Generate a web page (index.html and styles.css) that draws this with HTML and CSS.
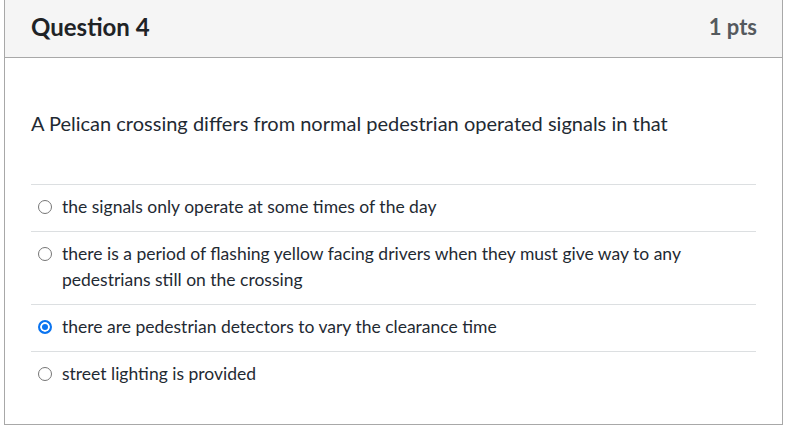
FILE: index.html
```html
<!DOCTYPE html>
<html lang="en">
<head>
<meta charset="utf-8">
<title>Question 4</title>
<link rel="stylesheet" href="styles.css">
</head>
<body>
<div class="question">
  <div class="header">
    <span class="title">Question 4</span>
    <span class="pts">1 pts</span>
  </div>
  <div class="content">
    <p class="text">A Pelican crossing differs from normal pedestrian operated signals in that</p>
    <div class="answers">
      <label class="answer"><span class="radio"></span><span class="label">the signals only operate at some times of the day</span></label>
      <label class="answer"><span class="radio"></span><span class="label">there is a period of flashing yellow facing drivers when they must give way to any pedestrians still on the crossing</span></label>
      <label class="answer"><span class="radio checked"></span><span class="label">there are pedestrian detectors to vary the clearance time</span></label>
      <label class="answer"><span class="radio"></span><span class="label">street lighting is provided</span></label>
    </div>
  </div>
</div>
</body>
</html>
```
FILE: styles.css
```css
* { box-sizing: border-box; }
body {
  margin: 0;
  background: #fff;
  font-family: Lato, "Noto Sans", sans-serif;
  color: #2d3b45;
}
.question {
  margin-left: 4px;
  width: 779px;
  border: 1px solid #a8a8a8;
  border-top: none;
}
.header {
  height: 58px;
  background: #f5f5f5;
  border-bottom: 1px solid #a8a8a8;
  display: flex;
  align-items: center;
  justify-content: space-between;
  padding: 0 25px 4px 26px;
}
.title {
  font-size: 24px;
  font-weight: 700;
  color: #1f2326;
}
.pts {
  font-size: 22px;
  font-weight: 700;
  color: #555a5e;
}
.content {
  padding: 0 26px 26px 26px;
}
.text {
  margin: 0;
  padding-top: 51px;
  padding-bottom: 47px;
  font-size: 20px;
  line-height: 28px;
  color: #1f2a33;
}
.answers {
  display: flex;
  flex-direction: column;
}
.answer {
  display: flex;
  align-items: flex-start;
  border-top: 1px solid #dcdfe1;
  padding: 9px 0 11px 0;
  font-size: 17.5px;
  line-height: 26px;
  color: #1f2a33;
}
.radio {
  flex: none;
  width: 14px;
  height: 14px;
  margin: 6px 10px 0 7px;
  border-radius: 50%;
  border: 1px solid #767676;
  background: #fff;
}
.radio.checked {
  border: 2px solid #0b74f0;
  background: #0b74f0;
  box-shadow: inset 0 0 0 2px #fff;
}
.label {
  padding-right: 60px;
}
```
